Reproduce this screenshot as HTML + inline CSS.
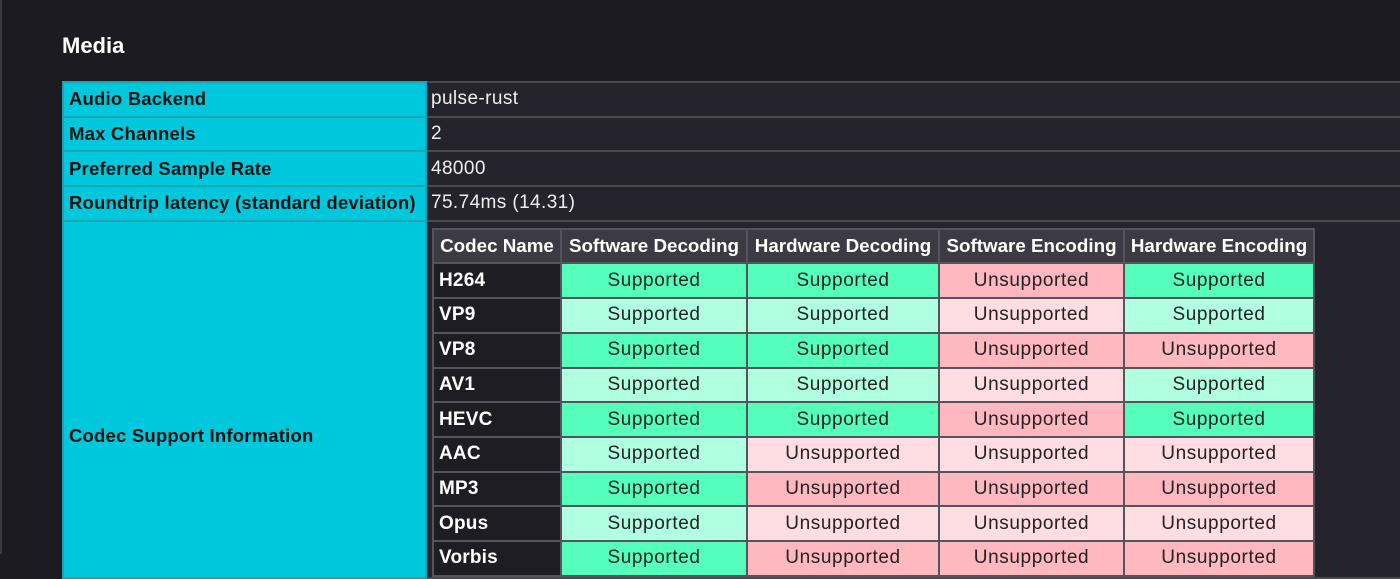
<!DOCTYPE html>
<html><head><meta charset="utf-8"><style>
html,body{margin:0;padding:0;background:#1c1b22;width:1400px;height:554px;overflow:hidden;font-family:"Liberation Sans",sans-serif;}
.edge{position:absolute;left:0;top:0;width:2px;height:554px;background:#3a3940}
h2{position:absolute;left:62px;top:33px;margin:0;color:#fff;font-size:22px;font-weight:bold}
table{border-collapse:collapse}
#outer{position:absolute;left:62px;top:81px;width:1345px}
#outer td{border:2px solid #4a4950;height:32.7px;padding:0 5px;font-size:19px;letter-spacing:0.4px}
#outer td.l{background:#00c8dc;color:#111;font-weight:bold;width:351px;white-space:nowrap;border-color:#1aa4b4;font-size:18.5px;letter-spacing:0.2px}
#outer td.v{background:#25242c;color:#eee;padding-left:4px}
#inner{margin:4px 0 0 0;letter-spacing:0}
#inner th{background:#3c3b44;color:#fff;font-weight:bold;font-size:18.8px;height:32.7px;border:2px solid #55545c;padding:0;white-space:nowrap;letter-spacing:0}
#inner td{height:32.7px;border:2px solid #55545c;text-align:center;color:#222;font-size:19px;padding:0;letter-spacing:0.6px}
#inner td.n{background:#1e1d24;color:#fff;font-weight:bold;text-align:left;padding:0 5px;letter-spacing:0.2px}
.G{background:#55ffbb!important}.g{background:#b0ffe0!important}.P{background:#ffb8c0!important}.p{background:#ffdde3!important}
</style></head><body>
<div class="edge"></div>
<h2>Media</h2>
<table id="outer">
<tr><td class="l">Audio Backend</td><td class="v">pulse-rust</td></tr>
<tr><td class="l">Max Channels</td><td class="v">2</td></tr>
<tr><td class="l">Preferred Sample Rate</td><td class="v">48000</td></tr>
<tr><td class="l">Roundtrip latency (standard deviation)</td><td class="v">75.74ms (14.31)</td></tr>
<tr><td class="l" style="vertical-align:top;padding-top:203px">Codec Support Information</td><td class="v" style="vertical-align:top;padding-top:2px;padding-left:5px">
<table id="inner">
<tr><th style="width:126px">Codec Name</th><th style="width:184px">Software Decoding</th><th style="width:190px">Hardware Decoding</th><th style="width:183px">Software Encoding</th><th style="width:188px">Hardware Encoding</th></tr>
<tr><td class="n">H264</td><td class="G">Supported</td><td class="G">Supported</td><td class="P">Unsupported</td><td class="G">Supported</td></tr>
<tr><td class="n">VP9</td><td class="g">Supported</td><td class="g">Supported</td><td class="p">Unsupported</td><td class="g">Supported</td></tr>
<tr><td class="n">VP8</td><td class="G">Supported</td><td class="G">Supported</td><td class="P">Unsupported</td><td class="P">Unsupported</td></tr>
<tr><td class="n">AV1</td><td class="g">Supported</td><td class="g">Supported</td><td class="p">Unsupported</td><td class="g">Supported</td></tr>
<tr><td class="n">HEVC</td><td class="G">Supported</td><td class="G">Supported</td><td class="P">Unsupported</td><td class="G">Supported</td></tr>
<tr><td class="n">AAC</td><td class="g">Supported</td><td class="p">Unsupported</td><td class="p">Unsupported</td><td class="p">Unsupported</td></tr>
<tr><td class="n">MP3</td><td class="G">Supported</td><td class="P">Unsupported</td><td class="P">Unsupported</td><td class="P">Unsupported</td></tr>
<tr><td class="n">Opus</td><td class="g">Supported</td><td class="p">Unsupported</td><td class="p">Unsupported</td><td class="p">Unsupported</td></tr>
<tr><td class="n">Vorbis</td><td class="G">Supported</td><td class="P">Unsupported</td><td class="P">Unsupported</td><td class="P">Unsupported</td></tr>
</table>
</td></tr>
</table>
</body></html>
